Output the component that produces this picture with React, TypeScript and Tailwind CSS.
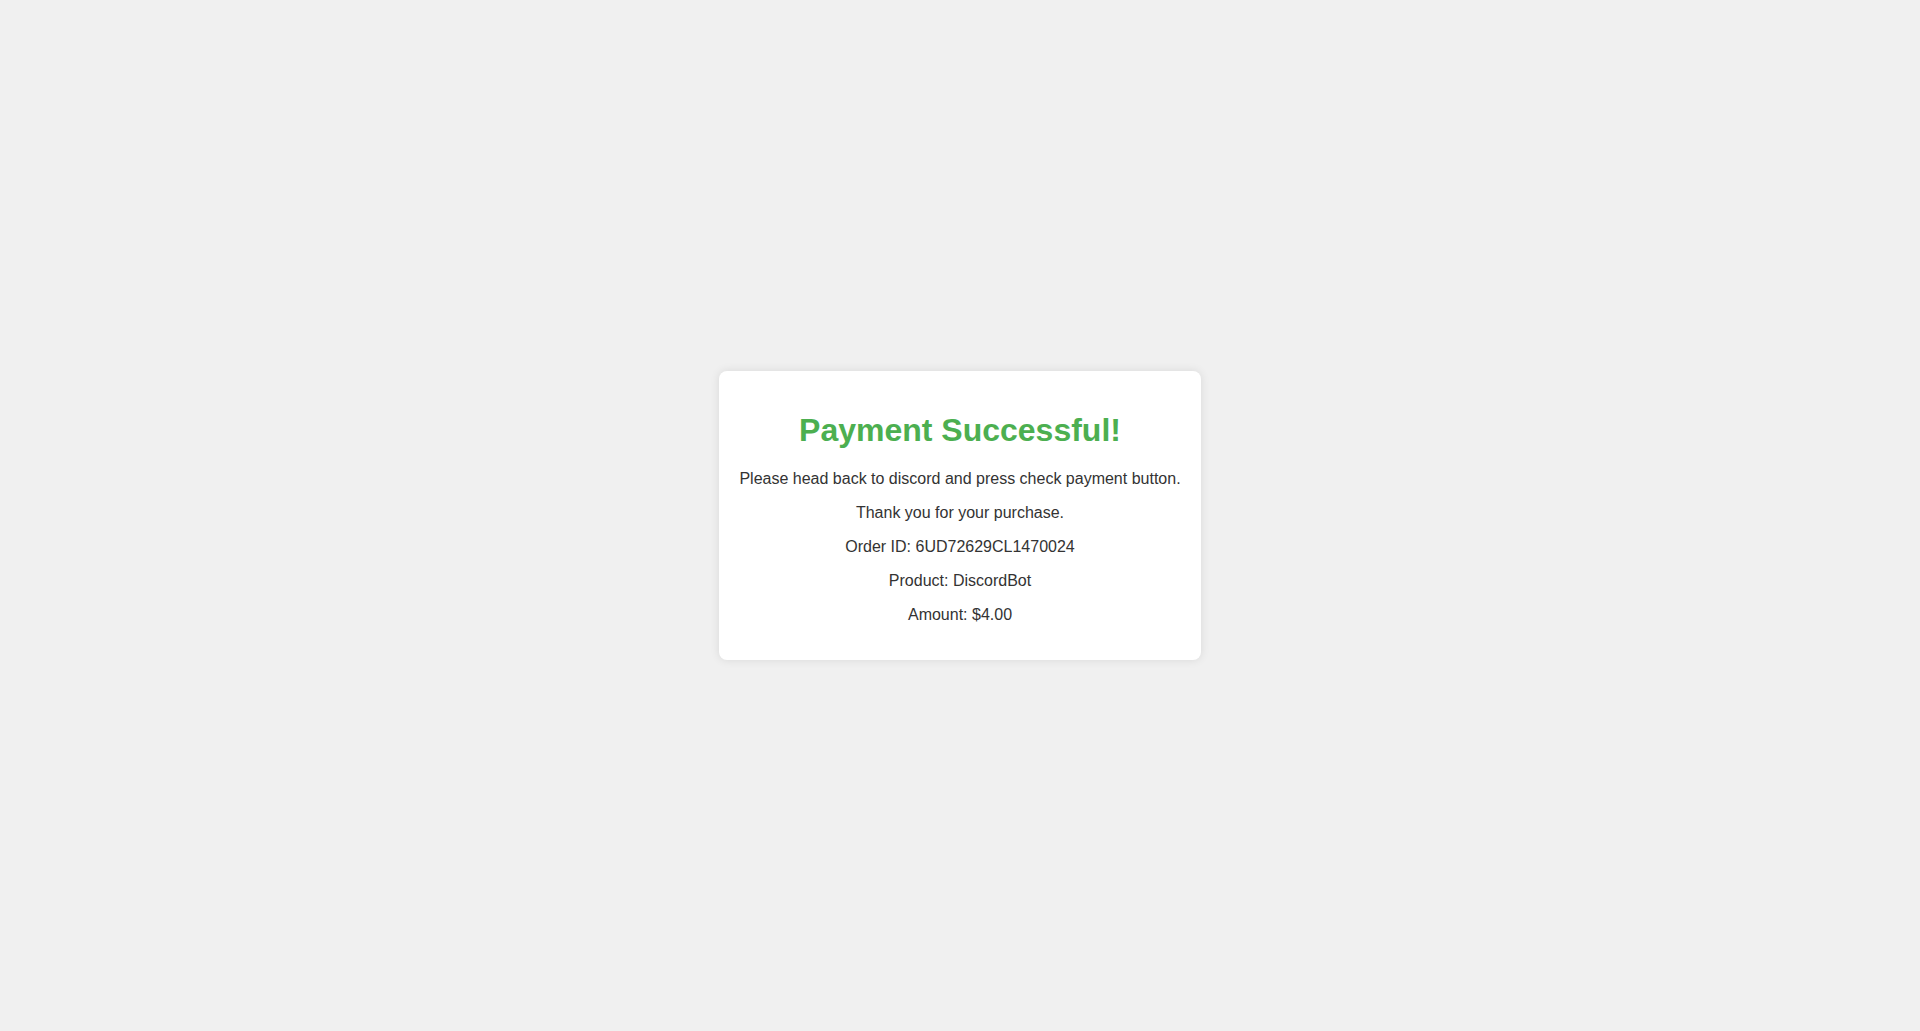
const App = () => {
  return (
    <div className="min-h-screen bg-[#f0f0f0] flex items-center justify-center font-['Liberation_Sans',Arial,sans-serif]">
      <div className="bg-white p-5 rounded-lg shadow-[0_0_10px_rgba(0,0,0,0.1)] text-center text-[#333]">
        <h1 className="text-[32px] font-bold leading-[normal] my-[21.44px] text-[#4CAF50]">Payment Successful!</h1>
        <p className="text-base leading-[normal] my-4">Please head back to discord and press check payment button.</p>
        <p className="text-base leading-[normal] my-4">Thank you for your purchase.</p>
        <p className="text-base leading-[normal] my-4">Order ID: 6UD72629CL1470024</p>
        <p className="text-base leading-[normal] my-4">Product: DiscordBot</p>
        <p className="text-base leading-[normal] my-4">Amount: $4.00</p>
      </div>
    </div>
  );
};

export default App;
